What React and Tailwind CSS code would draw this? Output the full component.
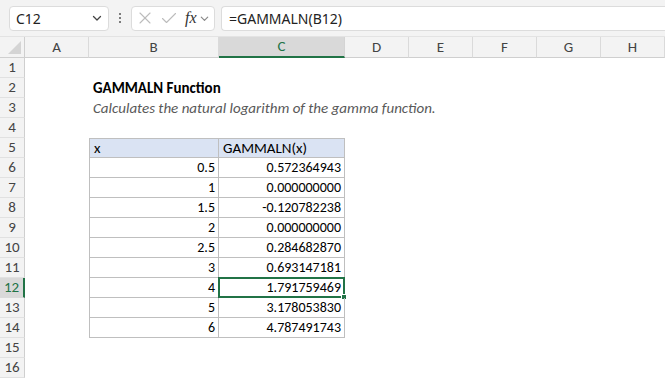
import React from "react";

const cols = ["A", "B", "C", "D", "E", "F", "G", "H"];

const data = [
  ["0.5", "0.572364943"],
  ["1", "0.000000000"],
  ["1.5", "-0.120782238"],
  ["2", "0.000000000"],
  ["2.5", "0.284682870"],
  ["3", "0.693147181"],
  ["4", "1.791759469"],
  ["5", "3.178053830"],
  ["6", "4.787491743"],
];

function Chevron({ className }) {
  return (
    <svg viewBox="0 0 12 12" className={className} fill="none" stroke="currentColor" strokeWidth="1.3" strokeLinecap="round" strokeLinejoin="round">
      <polyline points="2.5 4.5 6 8 9.5 4.5" />
    </svg>
  );
}

function Toolbar() {
  return (
    <div className="flex h-[37px] items-center bg-[#f3f3f3] pl-[9px] border-b border-[#e3e3e3]">
      <div className="flex h-[25px] w-[100px] items-center justify-between rounded-[4px] border border-[#dcdcdc] bg-white pl-[6px] pr-[5px] text-[14px] text-[#222]" style={{ fontFamily: "'Noto Sans', sans-serif" }}>
        <span>C12</span>
        <Chevron className="h-[12px] w-[12px] text-[#444]" />
      </div>
      <div className="flex w-[22px] flex-col items-center justify-center gap-[2px]">
        <span className="h-[2px] w-[2px] rounded-full bg-[#555]" />
        <span className="h-[2px] w-[2px] rounded-full bg-[#555]" />
        <span className="h-[2px] w-[2px] rounded-full bg-[#555]" />
      </div>
      <div className="flex h-[25px] w-[84px] items-center rounded-[4px] border border-[#dcdcdc] bg-white pl-[6px]">
        <svg viewBox="0 0 14 14" className="h-[14px] w-[14px] text-[#bcbcbc]" fill="none" stroke="currentColor" strokeWidth="1.1" strokeLinecap="round">
          <line x1="2" y1="2" x2="12" y2="12" />
          <line x1="12" y1="2" x2="2" y2="12" />
        </svg>
        <svg viewBox="0 0 16 14" className="ml-[9px] h-[14px] w-[16px] text-[#bcbcbc]" fill="none" stroke="currentColor" strokeWidth="1.1" strokeLinecap="round" strokeLinejoin="round">
          <polyline points="1.5 7.5 5.5 11.5 14.5 2.5" />
        </svg>
        <span className="ml-[8px] text-[16px] italic leading-none text-[#333]" style={{ fontFamily: "'Liberation Serif', serif" }}>
          fx
        </span>
        <Chevron className="ml-[2px] h-[11px] w-[11px] text-[#888]" />
      </div>
      <div className="ml-[6px] flex h-[25px] flex-1 items-center rounded-l-[4px] border border-r-0 border-[#dcdcdc] bg-white pl-[7px] text-[14px] text-[#222]" style={{ fontFamily: "'Noto Sans', sans-serif" }}>
        =GAMMALN(B12)
      </div>
    </div>
  );
}

function cellContent(r, c) {
  // r: 1-based row, c: column index 0..7 (A..H)
  if (r === 2 && c === 1)
    return <span className="whitespace-nowrap pl-[4px] text-[15px] font-bold text-[#000]">GAMMALN Function</span>;
  if (r === 3 && c === 1)
    return <span className="whitespace-nowrap pl-[4px] text-[15px] italic text-[#595959]">Calculates the natural logarithm of the gamma function.</span>;
  if (r === 5 && c === 1) return <span className="pl-[4px] text-[15px]">x</span>;
  if (r === 5 && c === 2) return <span className="pl-[4px] text-[15px]">GAMMALN(x)</span>;
  if (r >= 6 && r <= 14 && (c === 1 || c === 2)) {
    return <span className="ml-auto pr-[3px] text-[14px]">{data[r - 6][c - 1]}</span>;
  }
  return null;
}

function cellClass(r, c) {
  const inTable = r >= 5 && r <= 14 && (c === 1 || c === 2);
  let cls = "relative flex h-[20px] items-center overflow-visible";
  if (inTable) {
    cls += " border-b border-r border-[#bfbfbf]";
    if (c === 1) cls += " border-l";
    if (r === 5) cls += " border-t bg-[#dae3f3]";
  }
  return cls;
}

export default function App() {
  const rows = Array.from({ length: 16 }, (_, i) => i + 1);
  return (
    <div className="h-[380px] w-[665px] overflow-hidden bg-white" style={{ fontFamily: "Carlito, Lato, sans-serif" }}>
      <Toolbar />
      <div className="grid grid-cols-[25px_64px_130px_126px_64px_64px_64px_64px_64px]">
        {/* corner */}
        <div className="relative h-[21px] border-b border-r border-[#cfcfcf] bg-[#f3f3f3]">
          <div className="absolute bottom-[3px] right-[3px] h-0 w-0 border-b-[13px] border-l-[13px] border-b-[#d4d4d4] border-l-transparent" />
        </div>
        {cols.map((col) =>
          col === "C" ? (
            <div key={col} className="flex h-[21px] items-center justify-center border-b-2 border-r border-b-[#217346] border-r-[#d4d4d4] bg-[#d9d9d9] text-[15px] text-[#217346]">
              {col}
            </div>
          ) : (
            <div key={col} className="flex h-[21px] items-center justify-center border-b border-r border-b-[#cfcfcf] border-r-[#dadada] bg-[#f3f3f3] text-[15px] text-[#444]">
              {col}
            </div>
          )
        )}
        {rows.map((r) => (
          <React.Fragment key={r}>
            {r === 12 ? (
              <div className="flex h-[20px] items-center justify-center border-b border-r-2 border-b-[#dadada] border-r-[#217346] bg-[#d9d9d9] text-[15px] text-[#217346]">
                {r}
              </div>
            ) : (
              <div className="flex h-[20px] items-center justify-center border-b border-r border-b-[#e1e1e1] border-r-[#cfcfcf] bg-[#f3f3f3] text-[15px] text-[#444]">
                {r}
              </div>
            )}
            {cols.map((col, c) => (
              <div key={col} className={cellClass(r, c) + " text-[#000]"}>
                {cellContent(r, c)}
                {r === 12 && c === 2 && (
                  <div className="absolute -left-[1px] -top-[1px] bottom-[-1px] right-[-1px] border-2 border-[#217346]">
                    <div className="absolute -bottom-[4px] -right-[4px] h-[6px] w-[6px] border border-white bg-[#217346]" />
                  </div>
                )}
              </div>
            ))}
          </React.Fragment>
        ))}
      </div>
    </div>
  );
}
